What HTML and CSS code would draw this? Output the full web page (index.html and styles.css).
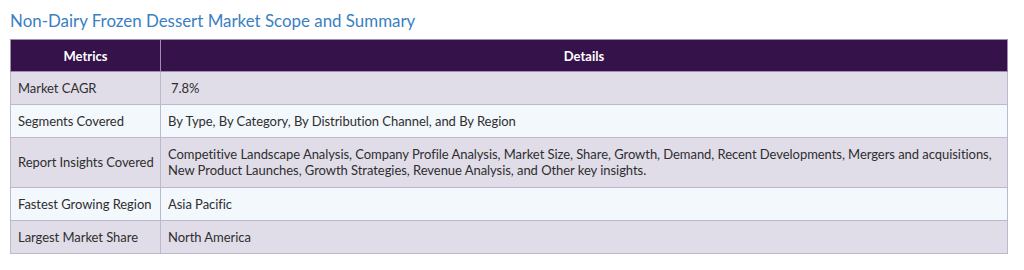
FILE: index.html
```html
<!DOCTYPE html>
<html>
<head>
<meta charset="utf-8">
<link rel="stylesheet" href="styles.css">
</head>
<body>
<div class="wrap">
  <h2 class="title">Non-Dairy Frozen Dessert Market Scope and Summary</h2>
  <table class="summary">
    <thead>
      <tr><th class="c1">Metrics</th><th>Details</th></tr>
    </thead>
    <tbody>
      <tr class="odd"><td class="c1">Market CAGR</td><td><span class="indent">7.8%</span></td></tr>
      <tr class="even"><td class="c1">Segments Covered</td><td>By Type, By Category, By Distribution Channel, and By Region</td></tr>
      <tr class="odd tall"><td class="c1">Report Insights Covered</td><td>Competitive Landscape Analysis, Company Profile Analysis, Market Size, Share, Growth, Demand, Recent Developments, Mergers and acquisitions, New Product Launches, Growth Strategies, Revenue Analysis, and Other key insights.</td></tr>
      <tr class="even"><td class="c1">Fastest Growing Region</td><td>Asia Pacific</td></tr>
      <tr class="odd"><td class="c1">Largest Market Share</td><td>North America</td></tr>
    </tbody>
  </table>
</div>
</body>
</html>
```
FILE: styles.css
```css
html, body {
  margin: 0;
  padding: 0;
  background: #ffffff;
}
body {
  font-family: Lato, "Open Sans", sans-serif;
  color: #2e2e2e;
}
.wrap {
  padding: 10px 16px 0 10px;
}
.title {
  margin: 0 0 7px 0;
  font-size: 16.9px;
  font-weight: 400;
  line-height: 22px;
  color: #3a7fc3;
}
.summary {
  width: 998px;
  border-collapse: collapse;
  table-layout: fixed;
  font-size: 13px;
  line-height: 16px;
}
.summary th, .summary td {
  border: 1px solid #bcb8cd;
  padding: 8px 6px 8px 7px;
  text-align: left;
  vertical-align: middle;
  letter-spacing: -0.05px;
}
.summary th {
  background: #36124b;
  color: #ffffff;
  font-weight: 700;
  font-size: 13px;
  text-align: center;
  padding: 8px 8px 7px;
  border-color: #9e8fb2;
  letter-spacing: 0;
}
.summary .c1 {
  width: 150px;
  box-sizing: border-box;
  white-space: nowrap;
}
.summary td.c1 {
  padding-left: 7px;
  padding-right: 2px;
}
.tall td {
  padding-top: 8px;
  padding-bottom: 9px;
}
.odd td {
  background: #e0dde9;
}
.even td {
  background: #f3f8fc;
}
.indent {
  padding-left: 3px;
}
```
